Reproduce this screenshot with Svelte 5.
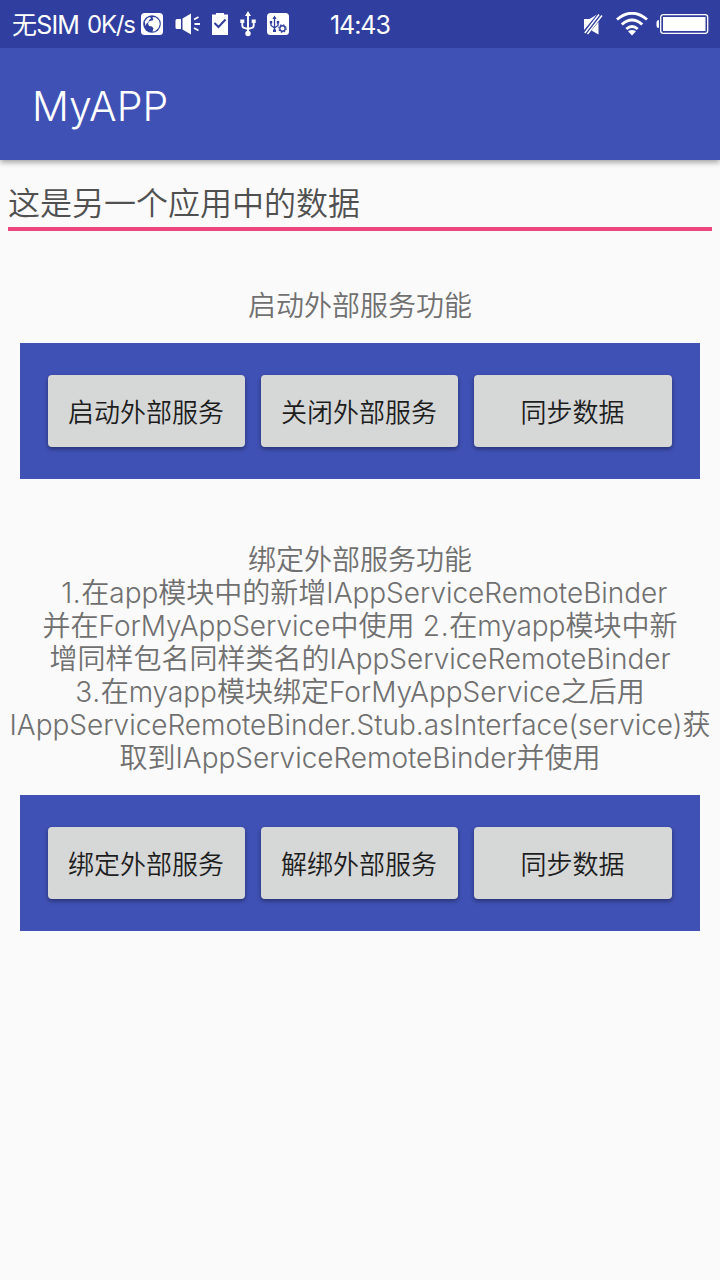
<script>
  const groups = [
    {
      lines: [['启动外部服务功能']],
      buttons: ['启动外部服务', '关闭外部服务', '同步数据']
    },
    {
      lines: [
        ['绑定外部服务功能'],
        [' 1.', '在', 'app', '模块中的新增', 'IAppServiceRemoteBinder'],
        ['并在', 'ForMyAppService', '中使用', ' 2.', '在', 'myapp', '模块中新'],
        ['增同样包名同样类名的', 'IAppServiceRemoteBinder'],
        ['3.', '在', 'myapp', '模块绑定', 'ForMyAppService', '之后用'],
        ['IAppServiceRemoteBinder.Stub.asInterface(service)', '获'],
        ['取到', 'IAppServiceRemoteBinder', '并使用']
      ],
      buttons: ['绑定外部服务', '解绑外部服务', '同步数据']
    }
  ];
  const isLatin = (s) => s.charCodeAt(0) < 128;
  const isNumber = (s) => /^ ?\d\.$/.test(s);
</script>

<div class="screen">
  <header class="status">
    <span class="carrier">无<span class="sim">SIM</span></span>
    <span class="speed">0K/s</span>
    <svg class="globe" width="22" height="22" viewBox="0 0 22 22">
      <rect width="22" height="22" rx="3.5" fill="#fff" />
      <circle cx="11" cy="11" r="8.800" fill="#303f9f" />
      <path d="M3.800 8.500 6.500 5l2.500-1 1 1.500-2 1.500-.5 2-2 1.500-1 2.500ZM12 4l3 .5 3 3 .8 3.500-1.300 4-3.500 3.300-2.500.2 1-3-1.500-2-3-.5-1-2.500 1.500-2.500 3-.5 1-1.500-1-1Z" fill="#fff" />
    </svg>
    <svg class="speaker" width="26" height="22" viewBox="0 0 26 22">
      <path d="M2 6h4v10H2a1.500 1.500 0 0 1-1.500-1.500v-7A1.500 1.500 0 0 1 2 6Zm5.500-.5L16 .5v21l-8.500-5Z" fill="#fff" />
      <path d="m19 6.500 4.500-2.500M19.500 11H25M19 15l4.500 2.500" stroke="#fff" stroke-width="1.900" />
    </svg>
    <svg class="clip" width="16" height="22" viewBox="0 0 16 22">
      <path d="M0 1.500h4V0h8v1.500h4V22H0Z" fill="#fff" />
      <path d="m2.500 10 4 4L13.500 6.500" fill="none" stroke="#303f9f" stroke-width="2" />
    </svg>
    <svg class="usb" width="16" height="26" viewBox="0 0 16 26">
      <path d="M8 3v20M2.300 11v3.500q0 2 2 2.400L8 18l3.700-1.100q2-.4 2-2.400V11" fill="none" stroke="#fff" stroke-width="1.900" />
      <path d="m8 0 3 5H5ZM.3 8.500h4V12h-4Zm11.400 0h4V12h-4Z" fill="#fff" />
      <circle cx="8" cy="22.500" r="2.700" fill="#fff" />
    </svg>
    <svg class="usbset" width="22" height="22" viewBox="0 0 22 22">
      <rect width="22" height="22" rx="3.500" fill="#fff" />
      <path d="M7.500 4v14M4 9v3.500l3.500 2.500L11 12.500V9" fill="none" stroke="#303f9f" stroke-width="1.300" />
      <path d="m7.500 2.500 2 3.500h-4ZM2.800 8h2.400v2.500H2.800Zm7 0h2.400v2.500H9.800ZM6 16.500h3v2.500H6Z" fill="#303f9f" />
      <circle cx="15.500" cy="15.500" r="2.700" fill="#fff" stroke="#303f9f" stroke-width="1.400" />
      <circle cx="15.500" cy="15.500" r="3.700" fill="none" stroke="#303f9f" stroke-width="1.200" stroke-dasharray="1.453 1.453" />
    </svg>
    <span class="time">14:43</span>
    <svg class="mute" width="19" height="21" viewBox="0 0 19 21">
      <path d="M0 5h5.500L13 .5 0 16ZM14.500 8v12.500L7.500 16.500Z" fill="#fff" />
      <path d="M.8 19.500 15.500.5" stroke="#303f9f" stroke-width="3.600" />
      <path d="M.8 19 15 .5M3.500 20 18 1.500" stroke="#fff" stroke-width="1.500" />
    </svg>
    <svg class="wifi" width="32" height="24" viewBox="0 0 32 24">
      <path d="M1 7.500Q16-5 31 7.500M5.800 12.500q10.200-9 20.400 0M10.300 17q5.700-5 11.400 0" fill="none" stroke="#fff" stroke-width="2.900" />
      <path d="M12 19.300q4-2.600 8 0L16 23.500Z" fill="#fff" />
    </svg>
    <svg class="battery" width="53" height="20" viewBox="0 0 53 20">
      <path d="M3 6v8Q.5 14 .5 11.500v-3Q.5 6 3 6Z" fill="#fff" />
      <rect x="4.700" y=".7" width="47" height="18.600" rx="2.500" fill="none" stroke="#fff" stroke-width="1.300" />
      <rect x="7" y="3" width="42.500" height="14" fill="#fff" />
    </svg>
  </header>

  <div class="appbar"><h1>MyAPP</h1></div>

  <main>
    <div class="field">这是另一个应用中的数据</div>
    {#each groups as g}
      <section>
        <div class="label">
          {#each g.lines as line}
            <div class="line">{#each line as s}<span class:latin={isLatin(s)} class:number={isNumber(s)}>{s}</span>{/each}</div>
          {/each}
        </div>
        <div class="panel">
          {#each g.buttons as b}<button>{b}</button>{/each}
        </div>
      </section>
    {/each}
  </main>
</div>

<style>
  .screen {
    width: 720px;
    height: 1280px;
    background: #fafafa;
    overflow: hidden;
    font-family: Inter, "Noto Sans CJK SC", sans-serif;
    font-weight: 350;
  }
  .status {
    position: relative;
    z-index: 1;
    display: flex;
    align-items: center;
    height: 48px;
    box-sizing: border-box;
    padding: 0 12px;
    background: #303f9f;
    color: #fff;
    font-size: 25px;
    font-weight: 400;
    line-height: 46px;
    white-space: nowrap;
  }
  .status > span { padding-top: 2px; }
  .status svg { flex: none; }
  .carrier { width: 75px; letter-spacing: -0.800px; }
  .speed { width: 54px; font-size: 24px; letter-spacing: -1.200px; }
  .speaker { margin-left: 12px; }
  .clip { margin-left: 11px; }
  .usb { margin-left: 12px; }
  .usbset { margin-left: 11px; }
  .time { margin-left: 41px; letter-spacing: -1.050px; }
  .mute { margin-left: auto; }
  .wifi { margin: 0 8px 0 13px; }
  .battery { margin-right: -1px; }
  .appbar {
    position: relative;
    display: flex;
    align-items: center;
    height: 112px;
    padding-left: 32px;
    background: #3f51b5;
    box-shadow: 0 2px 6px rgba(0, 0, 0, 0.400);
  }
  h1 {
    margin: 4px 0 0;
    color: #fff;
    font-size: 41px;
    font-weight: 300;
    line-height: 48px;
  }
  .field {
    height: 71px;
    box-sizing: border-box;
    margin: 0 8px;
    padding-top: 20px;
    border-bottom: 4px solid #ee457f;
    color: #505050;
    font-size: 32px;
    line-height: 48px;
  }
  .label {
    color: #707070;
    font-size: 28px;
    line-height: 33px;
    text-align: center;
    padding: 59px 0 20px;
  }
  section + section .label { padding-top: 65px; padding-bottom: 20px; }
  .line { height: 33px; white-space: pre; }
  .latin { letter-spacing: -0.030px; }
  .number { letter-spacing: 0.600px; }
  .panel {
    display: grid;
    grid-template-columns: 197px 197px 198px;
    gap: 16px;
    height: 136px;
    box-sizing: border-box;
    margin: 0 20px;
    padding: 32px 28px;
    background: #3f51b5;
  }
  button {
    border: 0;
    border-radius: 4px;
    padding: 3px 1px 0 0;
    background: #d6d7d7;
    color: #1d1d1d;
    font: inherit;
    font-size: 26px;
    line-height: 69px;
    white-space: nowrap;
    box-shadow: 0 2px 4px rgba(0, 0, 0, 0.400);
  }
</style>
